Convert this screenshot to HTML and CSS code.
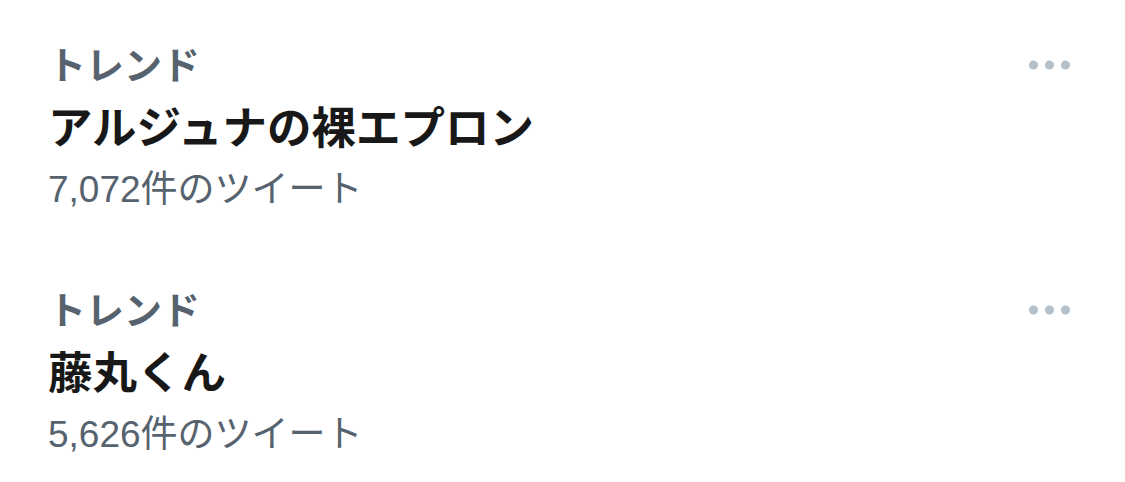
FILE: index.html
```html
<!DOCTYPE html>
<html lang="ja">
<head>
  <meta charset="UTF-8">
  <title>トレンド</title>
  <link rel="stylesheet" href="styles.css">
</head>
<body>

<div class="trend-list">
  <div class="trend">
    <div class="trend-text">
      <div class="trend-label">トレンド</div>
      <div class="trend-title">アルジュナの裸エプロン</div>
      <div class="trend-count">7,072件のツイート</div>
    </div>
    <div class="trend-more">
      <svg width="42" height="10" viewBox="0 0 42 10"><circle cx="4.5" cy="5" r="4.5"/><circle cx="20.5" cy="5" r="4.5"/><circle cx="36.5" cy="5" r="4.5"/></svg>
    </div>
  </div>

  <div class="trend">
    <div class="trend-text">
      <div class="trend-label">トレンド</div>
      <div class="trend-title">藤丸くん</div>
      <div class="trend-count">5,626件のツイート</div>
    </div>
    <div class="trend-more">
      <svg width="42" height="10" viewBox="0 0 42 10"><circle cx="4.5" cy="5" r="4.5"/><circle cx="20.5" cy="5" r="4.5"/><circle cx="36.5" cy="5" r="4.5"/></svg>
    </div>
  </div>
</div>

</body>
</html>
```

FILE: styles.css
```css
body {
  margin: 0;
  background-color: #fff;
  font-family: "Liberation Sans", "Noto Sans CJK JP", sans-serif;
}

.trend {
  display: flex;
  justify-content: space-between;
  align-items: flex-start;
  padding: 37px 54px 28px 48px;
}

.trend-label {
  font-size: 38px;
  line-height: 58px;
  font-weight: bold;
  color: #56636e;
}

.trend-title {
  font-size: 44.5px;
  line-height: 68px;
  font-weight: bold;
  color: #181818;
}

.trend-count {
  font-size: 37px;
  line-height: 54px;
  color: #56636e;
}

/* bouton "plus" */
.trend-more {
  height: 56px;
  display: flex;
  align-items: center;
}

.trend-more svg {
  fill: #b4c0ca;
}
```
